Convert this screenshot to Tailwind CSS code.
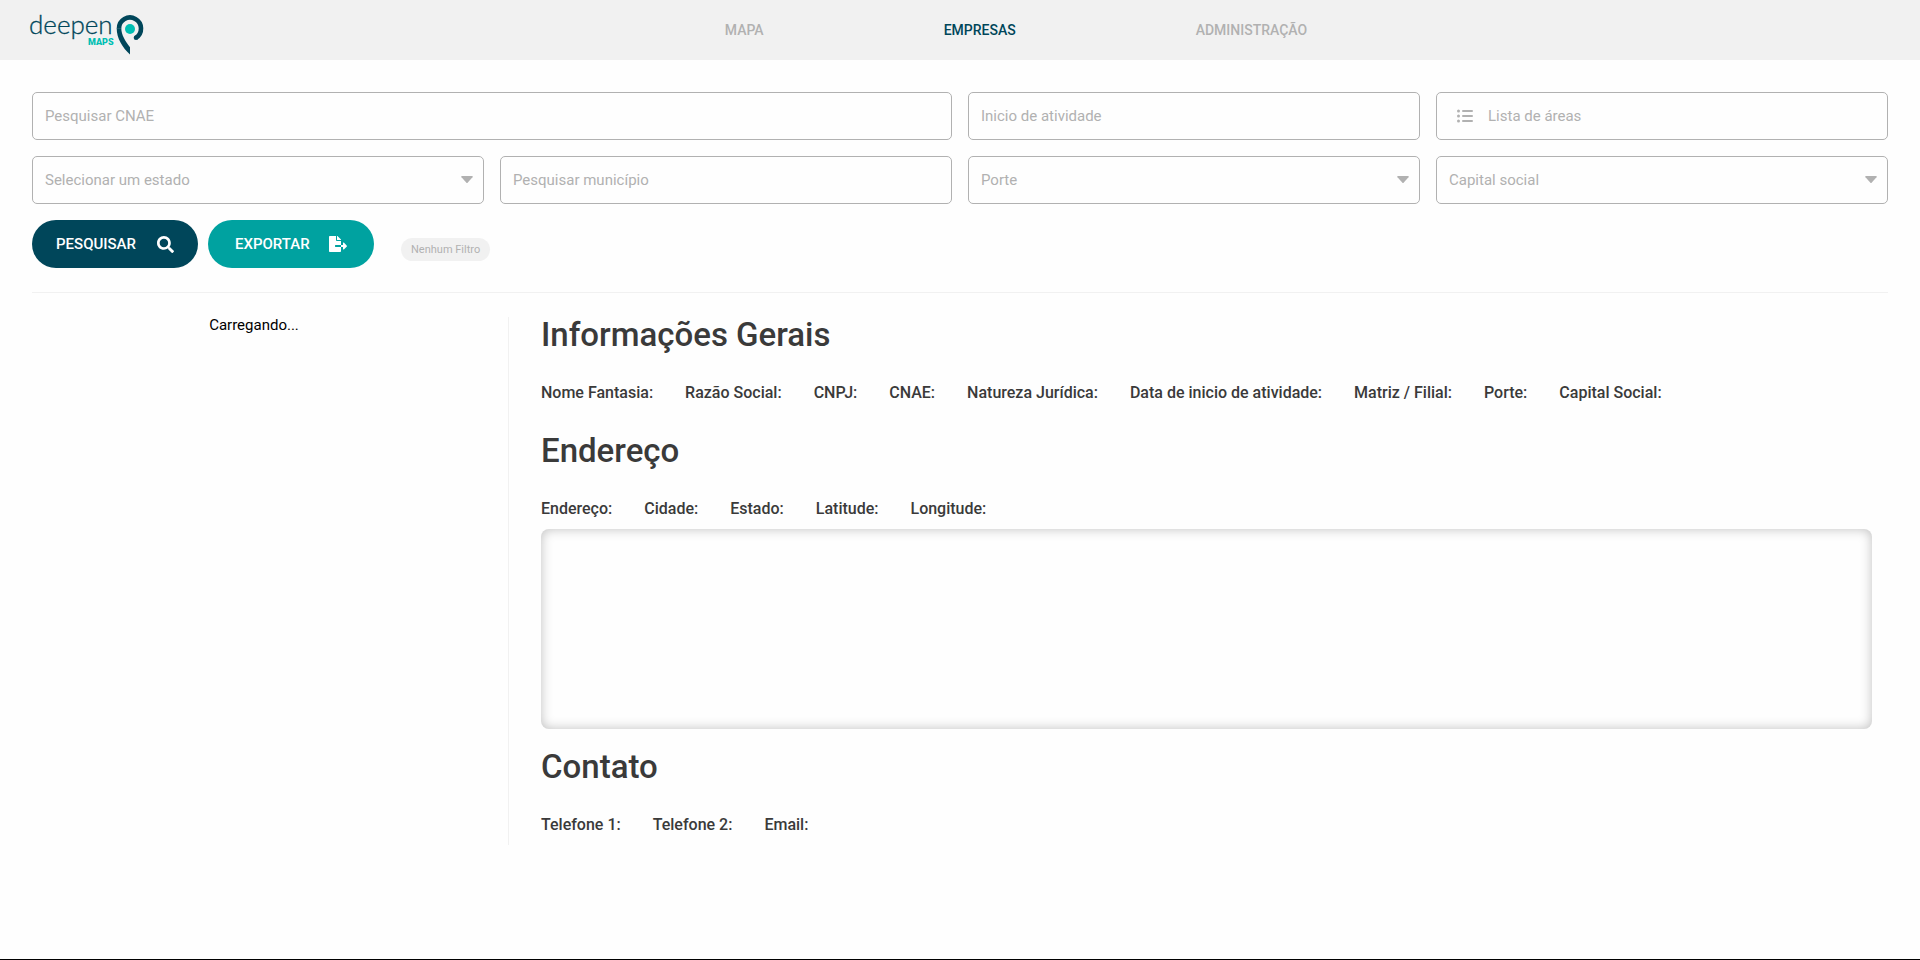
<!DOCTYPE html>
<html lang="pt-BR">
<head>
<meta charset="utf-8">
<meta name="viewport" content="width=device-width, initial-scale=1">
<title>Deepen Maps - Empresas</title>
<script src="https://cdn.jsdelivr.net/npm/@tailwindcss/browser@4"></script>
</head>
<body class="flex min-h-screen flex-col border-b border-black bg-[#fefefe] font-['Roboto',sans-serif] text-base text-[#3a3a3a]">
<header class="flex h-[60px] items-center bg-[#f1f1f1] pl-7">
  <a href="#" aria-label="Deepen Maps" class="shrink-0">
    <svg class="block overflow-visible" width="120" height="44" viewBox="0 0 120 44" aria-hidden="true">
      <text x="1" y="26" font-family="Lato" font-weight="300" font-size="26" fill="#00465a" stroke="#00465a" stroke-width=".3">deepen</text>
      <text x="60" y="37" font-family="Roboto" font-weight="900" font-size="9" fill="#00bfb3">MAPS</text>
      <path d="M107.800 29.900A11 11 0 1 0 91 20.500" fill="none" stroke="#00465a" stroke-width="4.600"/>
      <circle cx="108" cy="29.700" r="2.300" fill="#00465a"/>
      <path d="M88.700 20.300C88.700 30.500 94.500 39.500 102 46.600V39.200C97.500 33.500 93.300 27 93.300 20.300Z" fill="#00465a"/>
      <circle cx="102" cy="21" r="5" fill="#00bfb3"/>
    </svg>
  </a>
  <nav class="flex flex-1 justify-center gap-[180px] pr-9 text-sm font-medium text-[#b1b1b1]">
    <a href="#">MAPA</a>
    <a href="#" aria-current="page" class="text-[#00465a]">EMPRESAS</a>
    <a href="#">ADMINISTRAÇÃO</a>
  </nav>
</header>

<main class="px-8 pt-8">
  <form>
    <div class="grid grid-cols-4 gap-4 text-[15px] text-[#b1b1b1]">
      <input aria-label="Pesquisar CNAE" placeholder="Pesquisar CNAE" class="col-span-2 h-12 w-full rounded-[5px] border border-[#b1b1b1] px-3 placeholder:text-[#b1b1b1]">
      <input aria-label="Inicio de atividade" placeholder="Inicio de atividade" class="h-12 w-full rounded-[5px] border border-[#b1b1b1] px-3 placeholder:text-[#b1b1b1]">
      <button type="button" class="flex h-12 w-full items-center gap-[15px] rounded-[5px] border border-[#b1b1b1] px-5">
        <svg width="16" height="14" viewBox="0 0 16 14" fill="currentColor" aria-hidden="true">
          <circle cx="1.500" cy="2" r="1.500"/><circle cx="1.500" cy="7" r="1.500"/><circle cx="1.500" cy="12" r="1.500"/>
          <rect x="5" y="1" width="11" height="2" rx="1"/><rect x="5" y="6" width="11" height="2" rx="1"/><rect x="5" y="11" width="11" height="2" rx="1"/>
        </svg>
        <span>Lista de áreas</span>
      </button>
      <div class="relative">
        <select aria-label="Estado" class="h-12 w-full appearance-none rounded-[5px] border border-[#b1b1b1] px-3"><option>Selecionar um estado</option></select>
        <svg class="pointer-events-none absolute right-[11px] top-5" width="12" height="8" viewBox="0 0 12 8" fill="currentColor" aria-hidden="true"><path d="M.8 0h10.400q1 .300.300 1.200L6.600 6.700q-.6.600-1.200 0L.5 1.200Q-.2.300.8 0Z"/></svg>
      </div>
      <input aria-label="Pesquisar município" placeholder="Pesquisar município" class="h-12 w-full rounded-[5px] border border-[#b1b1b1] px-3 placeholder:text-[#b1b1b1]">
      <div class="relative">
        <select aria-label="Porte" class="h-12 w-full appearance-none rounded-[5px] border border-[#b1b1b1] px-3"><option>Porte</option></select>
        <svg class="pointer-events-none absolute right-[11px] top-5" width="12" height="8" viewBox="0 0 12 8" fill="currentColor" aria-hidden="true"><path d="M.8 0h10.400q1 .300.300 1.200L6.600 6.700q-.6.600-1.200 0L.5 1.200Q-.2.300.8 0Z"/></svg>
      </div>
      <div class="relative">
        <select aria-label="Capital social" class="h-12 w-full appearance-none rounded-[5px] border border-[#b1b1b1] px-3"><option>Capital social</option></select>
        <svg class="pointer-events-none absolute right-[11px] top-5" width="12" height="8" viewBox="0 0 12 8" fill="currentColor" aria-hidden="true"><path d="M.8 0h10.400q1 .300.300 1.200L6.600 6.700q-.6.600-1.200 0L.5 1.200Q-.2.300.8 0Z"/></svg>
      </div>
    </div>
    <div class="flex items-center border-b border-[#f1f1f1] pb-6 pt-4 text-[15px]">
      <button type="submit" class="flex h-12 w-[166px] items-center justify-between rounded-full bg-[#00465a] px-6 font-medium text-white">PESQUISAR
        <svg width="17" height="17" viewBox="0 0 512 512" fill="currentColor" aria-hidden="true"><path d="M505 442.700 405.300 343c-4.500-4.500-10.600-7-17-7H372c27.600-35.300 44-79.700 44-128C416 93.100 322.900 0 208 0S0 93.100 0 208s93.100 208 208 208c48.300 0 92.700-16.400 128-44v16.300c0 6.400 2.500 12.500 7 17l99.700 99.700c9.400 9.400 24.600 9.400 33.900 0l28.300-28.300c9.400-9.400 9.400-24.600.1-34zM208 336c-70.700 0-128-57.200-128-128 0-70.700 57.200-128 128-128 70.700 0 128 57.200 128 128 0 70.700-57.200 128-128 128z"/></svg>
      </button>
      <button type="button" class="ml-2.5 flex h-12 w-[166px] items-center justify-between rounded-full bg-[#00a2a0] px-[27px] font-medium text-white">EXPORTAR
        <svg width="18" height="16" viewBox="0 0 576 512" fill="currentColor" aria-hidden="true"><path d="M384 121.900c0-6.300-2.500-12.400-7-16.900L279.100 7c-4.500-4.500-10.600-7-17-7H256v128h128zM571 308l-95.700-96.400c-10.100-10.100-27.400-3-27.400 11.300V288h-64v64h64v65.200c0 14.300 17.300 21.400 27.400 11.300L571 332c6.600-6.600 6.600-17.400 0-24zm-379 28v-32c0-8.800 7.200-16 16-16h176V160H248c-13.200 0-24-10.800-24-24V0H24C10.700 0 0 10.700 0 24v464c0 13.300 10.700 24 24 24h336c13.300 0 24-10.700 24-24V352H208c-8.800 0-16-7.200-16-16z"/></svg>
      </button>
      <span class="ml-[27px] mt-2.5 rounded-full bg-[#f1f1f1] px-2.5 text-[11px] leading-[23px] text-[#b1b1b1]">Nenhum Filtro</span>
    </div>
  </form>

  <div class="flex pt-6">
    <aside class="-ml-8 -mt-1 w-[508px] shrink-0 text-center text-[15px] leading-6 text-black">Carregando...</aside>
    <div class="min-w-0 flex-1 border-l border-[#f1f1f1] pb-2 pl-8 pr-4">
      <section>
        <h2 class="text-[33px] font-medium leading-9">Informações Gerais</h2>
        <ul class="mt-7 flex flex-wrap gap-x-8 text-base font-medium leading-6">
          <li>Nome Fantasia:</li><li>Razão Social:</li><li>CNPJ:</li><li>CNAE:</li><li>Natureza Jurídica:</li><li>Data de inicio de atividade:</li><li>Matriz / Filial:</li><li>Porte:</li><li>Capital Social:</li>
        </ul>
      </section>
      <section class="mt-7">
        <h2 class="text-[33px] font-medium leading-9">Endereço</h2>
        <ul class="mt-7 flex flex-wrap gap-x-8 text-base font-medium leading-6">
          <li>Endereço:</li><li>Cidade:</li><li>Estado:</li><li>Latitude:</li><li>Longitude:</li>
        </ul>
        <div class="mt-2 h-[200px] rounded-lg shadow-[inset_0_0_12px_rgba(0,0,0,0.25)]"></div>
      </section>
      <section class="mt-5">
        <h2 class="text-[33px] font-medium leading-9">Contato</h2>
        <ul class="mt-7 flex flex-wrap gap-x-8 text-base font-medium leading-6">
          <li>Telefone 1:</li><li>Telefone 2:</li><li>Email:</li>
        </ul>
      </section>
    </div>
  </div>
</main>
</body>
</html>
